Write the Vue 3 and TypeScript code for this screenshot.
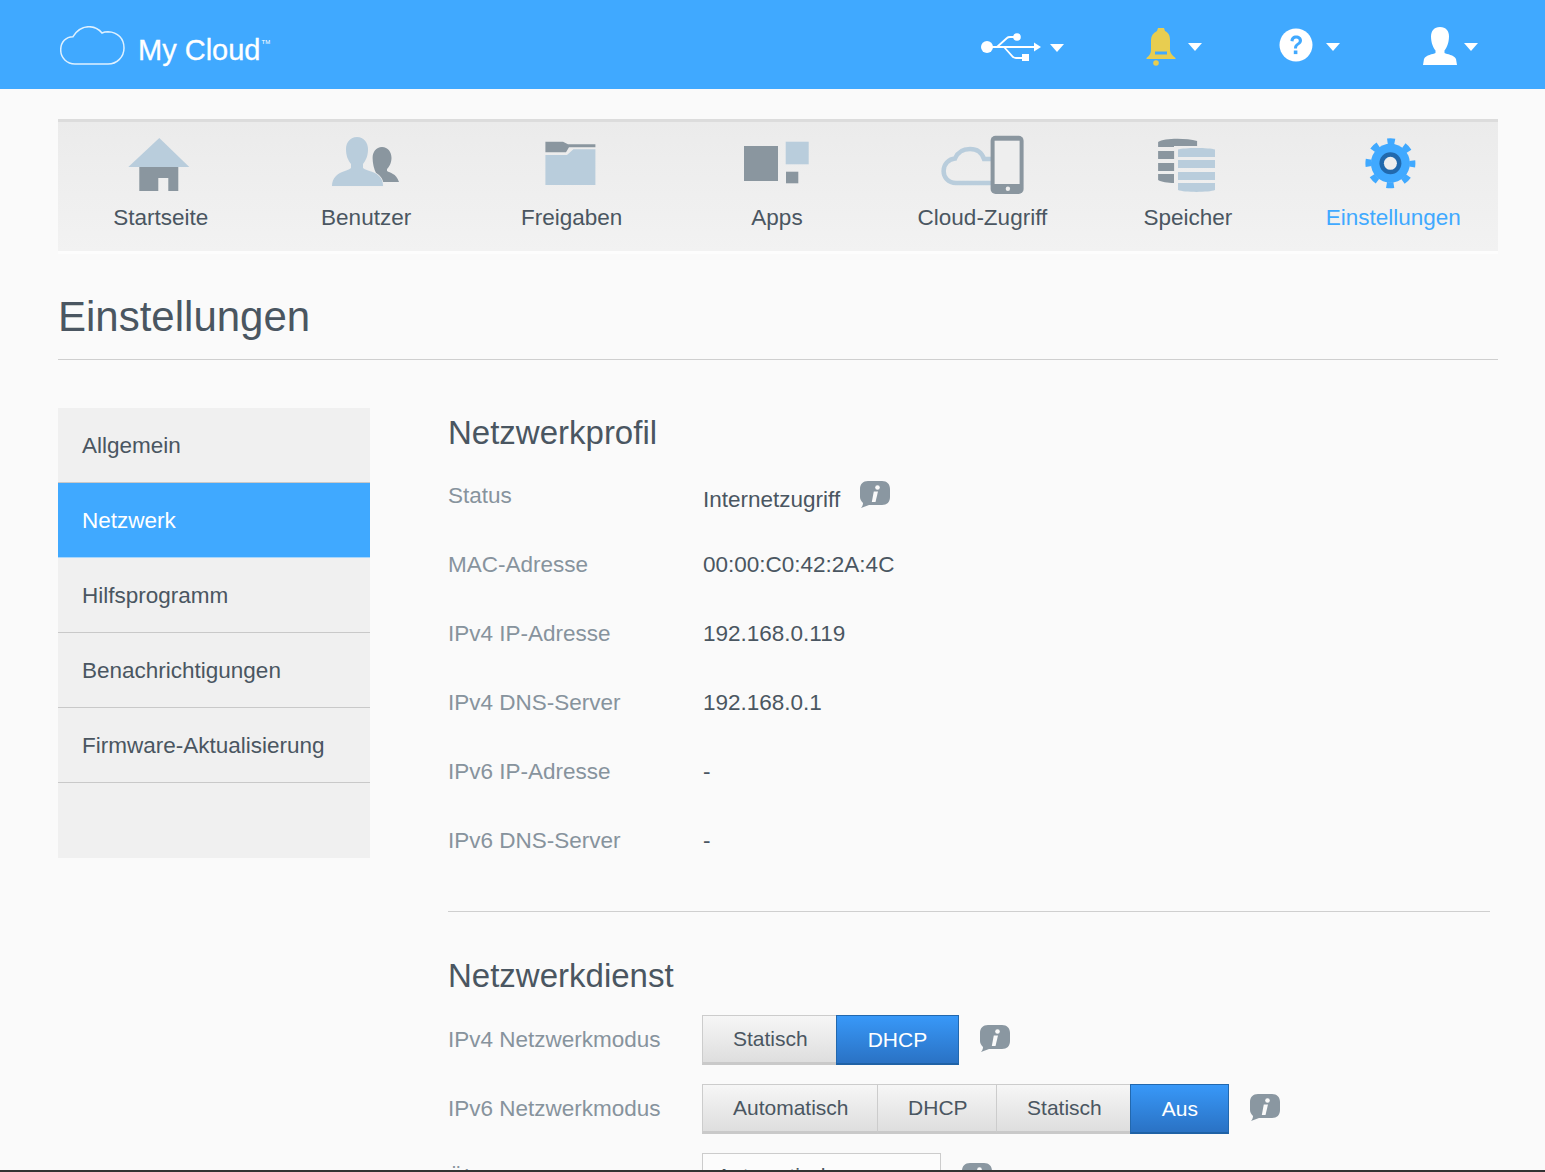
<script setup lang="ts">
const sideItems = [
  { name: 'Allgemein', active: false },
  { name: 'Netzwerk', active: true },
  { name: 'Hilfsprogramm', active: false },
  { name: 'Benachrichtigungen', active: false },
  { name: 'Firmware-Aktualisierung', active: false },
  { name: '', active: false },
]

const profile = [
  { label: 'MAC-Adresse', value: '00:00:C0:42:2A:4C' },
  { label: 'IPv4 IP-Adresse', value: '192.168.0.119' },
  { label: 'IPv4 DNS-Server', value: '192.168.0.1' },
  { label: 'IPv6 IP-Adresse', value: '-' },
  { label: 'IPv6 DNS-Server', value: '-' },
]

const ipv4Modes = [
  { name: 'Statisch', active: false },
  { name: 'DHCP', active: true },
]

const ipv6Modes = [
  { name: 'Automatisch', active: false },
  { name: 'DHCP', active: false },
  { name: 'Statisch', active: false },
  { name: 'Aus', active: true },
]
</script>

<template>
  <div class="page">
    <header class="topbar">
      <div class="logo">
        <svg class="logo-cloud" width="66" height="41" viewBox="0 0 66 41">
          <path d="M15 38H48C57 38 64 31 64 22C64 13 58 6 48 5.700C46 5.700 44 6 42 7C38 2 34 0.700 29 0.700C23 0.700 17 4 13 10.700C6 10.700 0.700 16 0.700 24C0.700 32 7 38 15 38Z" fill="none" stroke="#dff1ff" stroke-width="1.500" />
        </svg>
        <span class="logo-text">My Cloud</span><span class="logo-tm">TM</span>
      </div>
      <div class="top-tools">
        <div class="tool tool-usb">
          <svg width="62" height="38" viewBox="0 0 62 38">
            <circle cx="7" cy="19" r="6" fill="#fff" />
            <path d="M7 19H57" stroke="#fff" stroke-width="1.800" />
            <path d="M54 14.500L61 19L54 23.500Z" fill="#fff" />
            <path d="M17 19L27 10Q28 9 30 9H36M24 19L33 29Q34.500 30 36 30H42" fill="none" stroke="#fff" stroke-width="1.800" />
            <circle cx="37" cy="9" r="3.800" fill="#fff" />
            <rect x="42" y="26" width="7" height="7" fill="#fff" />
          </svg>
          <i class="caret"></i>
        </div>
        <div class="tool tool-bell">
          <svg width="30" height="40" viewBox="0 0 30 40">
            <path d="M12 1H18L19 4C23 6 24 9 24 13V23C24 26 26 28 29.500 31V32H0.500V31C4 28 5 26 5 23V13C5 9 7 6 11 4Z" fill="#e8cd50" />
            <rect x="9" y="24.500" width="12" height="3" fill="#40a9ff" />
            <circle cx="10" cy="36" r="2.800" fill="#e8cd50" />
          </svg>
          <i class="caret"></i>
        </div>
        <div class="tool tool-help">
          <svg width="34" height="34" viewBox="0 0 34 34">
            <circle cx="17" cy="17" r="16.500" fill="#fff" />
            <path d="M11.500 13C11.500 9.500 14 7.500 17 7.500C20.500 7.500 23 9.500 23 12.500C23 15 21.500 16 20 17C18.500 18 18 18.800 18 20.500H15C15 18 15.800 16.800 17.500 15.500C19 14.500 19.800 13.800 19.800 12.700C19.800 11.300 18.700 10.500 17.200 10.500C15.500 10.500 14.500 11.500 14.500 13.500Z" fill="#40a9ff" />
            <rect x="14.800" y="22.500" width="3.600" height="3.600" fill="#40a9ff" />
          </svg>
          <i class="caret"></i>
        </div>
        <div class="tool tool-user">
          <svg width="34" height="38" viewBox="0 0 34 38">
            <path d="M17 0C23 0 26 4 26 9.500C26 16 23.500 21 21.500 23.500V26C24 27.500 31 27.500 33 32L34 38H0L1 32C3 27.500 10 27.500 12.500 26V23.500C10.500 21 8 16 8 9.500C8 4 11 0 17 0Z" fill="#fff" />
          </svg>
          <i class="caret"></i>
        </div>
      </div>
    </header>

    <div class="wrap">
      <nav class="mainnav">
        <a class="nav-item">
          <svg class="nav-icon" width="100" height="64" viewBox="0 0 100 64">
            <path d="M48.300 6L78.300 35H17.300Z" fill="#b9cddc" />
            <path d="M28.300 35H67.300V59H57.300V46H47.300V59H28.300Z" fill="#8a969f" />
          </svg>
          <span>Startseite</span>
        </a>
        <a class="nav-item">
          <svg class="nav-icon" width="100" height="64" viewBox="0 0 100 64">
            <path d="M66 15C72 15 75.500 20 75.500 26C75.500 31 73 35 71 37V39C74 41 80 41 83 50H66L60 41C58 37 56.600 31 56.600 26C56.600 20 60 15 66 15Z" fill="#8a969f" />
            <path d="M41 5C48 5 52 11 52 17C52 24 50 28 47 32V36C50 39 58 39 63 44C66 47 67 50 67 54H16C16 50 17 47 20 44C25 39 32 39 35 36V32C32 28 30 24 30 17C30 11 34 5 41 5Z" fill="#b9cddc" stroke="#ededed" stroke-width="1.500" paint-order="stroke" />
          </svg>
          <span>Benutzer</span>
        </a>
        <a class="nav-item">
          <svg class="nav-icon" width="100" height="64" viewBox="0 0 100 64">
            <path d="M23.400 9.700H41L46 12.300H73.400V15.300H47L44 20.300H23.400Z" fill="#8a969f" />
            <path d="M23.400 23H45L51.400 17.300H73.400V53H23.400Z" fill="#b9cddc" />
          </svg>
          <span>Freigaben</span>
        </a>
        <a class="nav-item">
          <svg class="nav-icon" width="100" height="64" viewBox="0 0 100 64">
            <rect x="17" y="14" width="34" height="35" fill="#8a969f" />
            <rect x="58.700" y="9.700" width="23" height="22.600" fill="#b9cddc" />
            <rect x="59" y="39.700" width="12.300" height="11.600" fill="#8a969f" />
          </svg>
          <span>Apps</span>
        </a>
        <a class="nav-item">
          <svg class="nav-icon" width="100" height="64" viewBox="0 0 100 64">
            <path d="M60 51H24C16 51 11.600 45 11.600 39C11.600 32 17 27 23 26.500C25.500 20.500 31 17 38 17C45 17 50 21 52 27L60 27" fill="none" stroke="#b9cddc" stroke-width="4.500" />
            <rect x="58.600" y="3.700" width="33" height="58.300" rx="5" fill="#8a969f" />
            <rect x="62.600" y="8.700" width="25" height="43.300" fill="#eeeeee" />
            <circle cx="75.900" cy="56.700" r="2.200" fill="#eeeeee" />
          </svg>
          <span>Cloud-Zugriff</span>
        </a>
        <a class="nav-item">
          <svg class="nav-icon" width="100" height="64" viewBox="0 0 100 64">
            <path d="M20.100 10C26 6 48 6 59.100 9V14H36V15H20.100Z" fill="#8a969f" />
            <rect x="20.100" y="19" width="16" height="8" fill="#8a969f" />
            <rect x="20.100" y="31" width="16" height="8" fill="#8a969f" />
            <path d="M20.100 42H36V51C30 51 23 50 20.100 48Z" fill="#8a969f" />
            <path d="M40 17.500C46 15.500 71 15.500 77 17.500V25H40Z" fill="#b9cddc" />
            <rect x="40" y="28" width="37" height="8" fill="#b9cddc" />
            <rect x="40" y="40" width="37" height="8" fill="#b9cddc" />
            <path d="M40 51H77V58C71 60.500 46 60.500 40 58Z" fill="#b9cddc" />
          </svg>
          <span>Speicher</span>
        </a>
        <a class="nav-item nav-item-active">
          <svg class="nav-icon" width="100" height="64" viewBox="0 0 100 64">
            <circle cx="47.400" cy="31.300" r="19.500" fill="#40a9ff" />
            <circle cx="47.400" cy="31.300" r="22" fill="none" stroke="#40a9ff" stroke-width="6" stroke-dasharray="7.500 9.780" stroke-dashoffset="3.750" />
            <circle cx="47.400" cy="31.300" r="11" fill="#2169ad" />
            <circle cx="47.400" cy="31.300" r="6.500" fill="#eeeeee" />
          </svg>
          <span>Einstellungen</span>
        </a>
      </nav>

      <h1 class="page-title">Einstellungen</h1>

      <div class="columns">
        <aside class="sidebar">
          <div
            v-for="item in sideItems"
            :key="item.name"
            class="side-item"
            :class="{ active: item.active }"
          >
            {{ item.name }}
          </div>
        </aside>

        <main class="content">
          <section class="section-profile">
            <h2>Netzwerkprofil</h2>
            <div class="row">
              <div class="label">Status</div>
              <div class="value value-status">Internetzugriff</div>
              <svg class="info info-status" width="30" height="27" viewBox="0 0 30 27">
                <path d="M8 0H22C27 0 30 3 30 8V16C30 21 27 24 22 24H9L1 27C2.500 25 3 24 3 22C1 20 0 18 0 16V8C0 3 3 0 8 0Z" fill="#8a97a1" />
                <circle cx="17.500" cy="6.500" r="2.300" fill="#fafafa" />
                <path d="M13.800 10.500H18L15.500 21H11.800Z" fill="#fafafa" />
              </svg>
            </div>
            <div v-for="row in profile" :key="row.label" class="row">
              <div class="label">{{ row.label }}</div>
              <div class="value">{{ row.value }}</div>
            </div>
          </section>

          <section class="section-service">
            <h2>Netzwerkdienst</h2>
            <div class="control-row">
              <div class="label">IPv4 Netzwerkmodus</div>
              <div class="segments">
                <button v-for="m in ipv4Modes" :key="m.name" class="segment" :class="{ on: m.active }">{{ m.name }}</button>
              </div>
              <svg class="info" width="30" height="27" viewBox="0 0 30 27">
                <path d="M8 0H22C27 0 30 3 30 8V16C30 21 27 24 22 24H9L1 27C2.500 25 3 24 3 22C1 20 0 18 0 16V8C0 3 3 0 8 0Z" fill="#8a97a1" />
                <circle cx="17.500" cy="6.500" r="2.300" fill="#fafafa" />
                <path d="M13.800 10.500H18L15.500 21H11.800Z" fill="#fafafa" />
              </svg>
            </div>
            <div class="control-row">
              <div class="label">IPv6 Netzwerkmodus</div>
              <div class="segments">
                <button v-for="m in ipv6Modes" :key="m.name" class="segment" :class="{ on: m.active }">{{ m.name }}</button>
              </div>
              <svg class="info" width="30" height="27" viewBox="0 0 30 27">
                <path d="M8 0H22C27 0 30 3 30 8V16C30 21 27 24 22 24H9L1 27C2.500 25 3 24 3 22C1 20 0 18 0 16V8C0 3 3 0 8 0Z" fill="#8a97a1" />
                <circle cx="17.500" cy="6.500" r="2.300" fill="#fafafa" />
                <path d="M13.800 10.500H18L15.500 21H11.800Z" fill="#fafafa" />
              </svg>
            </div>
            <div class="control-row">
              <div class="label">Übertragungsrate</div>
              <div class="select">Automatisch</div>
              <svg class="info" width="30" height="27" viewBox="0 0 30 27">
                <path d="M8 0H22C27 0 30 3 30 8V16C30 21 27 24 22 24H9L1 27C2.500 25 3 24 3 22C1 20 0 18 0 16V8C0 3 3 0 8 0Z" fill="#8a97a1" />
                <circle cx="17.500" cy="6.500" r="2.300" fill="#fafafa" />
                <path d="M13.800 10.500H18L15.500 21H11.800Z" fill="#fafafa" />
              </svg>
            </div>
          </section>
        </main>
      </div>
    </div>
    <div class="bottom-edge"></div>
  </div>
</template>

<style>
html,
body {
  margin: 0;
  height: 100%;
  overflow: hidden;
  background: #fafafa;
}
</style>

<style scoped>
.page {
  height: 1172px;
  overflow: hidden;
  background: #fafafa;
  color: #4a5661;
  font-family: 'Liberation Sans', Arial, sans-serif;
  font-size: 22.5px;
}

.topbar {
  height: 89px;
  background: #40a9ff;
  display: flex;
  align-items: center;
  justify-content: space-between;
  padding: 0 67px 0 60px;
}

.logo {
  display: flex;
  align-items: center;
  color: #fff;
}

.logo-cloud {
  margin-top: 3px;
}

.logo-text {
  margin-left: 12px;
  margin-top: 11px;
  font-size: 29px;
  -webkit-text-stroke: 0.3px #fff;
}

.logo-tm {
  font-size: 6px;
  margin-top: -6px;
  margin-left: 1px;
}

.top-tools {
  display: flex;
  align-items: center;
}

.tool {
  display: flex;
  align-items: center;
}

.tool svg {
  display: block;
}

.tool-usb {
  margin-top: 4px;
}

.tool-bell {
  margin-left: 82px;
  margin-top: 5px;
}

.tool-help {
  margin-left: 77px;
}

.tool-user {
  margin-left: 83px;
  margin-top: 2px;
}

.caret {
  display: block;
  width: 0;
  height: 0;
  border-left: 7.5px solid transparent;
  border-right: 7.5px solid transparent;
  border-top: 8px solid #fff;
  margin-left: 8px;
  margin-top: 2px;
}

.tool-bell .caret {
  margin-left: 12px;
  margin-top: -1px;
}

.tool-help .caret {
  margin-left: 13px;
  margin-top: 4px;
}

.tool-user .caret {
  margin-left: 7px;
  margin-top: 2px;
}

.wrap {
  padding: 30px 47px 0 58px;
}

.mainnav {
  display: grid;
  grid-template-columns: repeat(7, 1fr);
  height: 129px;
  padding-right: 2px;
  border-top: 3px solid #dcdcdc;
  border-bottom: 3px solid #fdfdfd;
  background: linear-gradient(#ebebeb, #f2f2f2);
}

.nav-item {
  display: flex;
  flex-direction: column;
  align-items: center;
  padding-top: 10px;
}

.nav-icon {
  display: block;
}

.nav-item span {
  margin-top: 9px;
}

.nav-item-active {
  color: #40a9ff;
}

.page-title {
  margin: 0;
  padding: 39px 0 18px;
  font-size: 42px;
  font-weight: 400;
  line-height: 48px;
  border-bottom: 1px solid #cfcfcf;
}

.columns {
  display: flex;
  margin-top: 48px;
}

.sidebar {
  width: 312px;
  flex: none;
  align-self: flex-start;
  background: #f0f0f0;
}

.side-item {
  height: 75px;
  box-sizing: border-box;
  padding: 2px 0 0 24px;
  display: flex;
  align-items: center;
  border-bottom: 1px solid #c9c9c9;
}

.side-item:last-child {
  border-bottom: 0;
}

.side-item.active {
  background: #40a9ff;
  color: #fff;
  border-bottom-color: #a9d7fc;
}

.content {
  margin-left: 78px;
  width: 1042px;
}

h2 {
  margin: 0;
  font-size: 33px;
  font-weight: 400;
  line-height: 48px;
}

.section-profile {
  padding-bottom: 36px;
  border-bottom: 1px solid #cfcfcf;
}

.section-profile h2 {
  padding-top: 1px;
  margin-bottom: 4px;
}

.row {
  display: flex;
  align-items: center;
  height: 69px;
}

.label {
  width: 255px;
  flex: none;
  color: #87939d;
}

.control-row .label {
  width: 254px;
}

.value-status {
  margin-top: 8px;
}

.info {
  display: block;
  flex: none;
  margin-left: 21px;
  margin-bottom: 4px;
}

.info-status {
  margin-left: 20px;
  margin-bottom: 2px;
}

.section-service {
  padding-top: 40px;
}

.section-service h2 {
  margin-bottom: 15px;
}

.control-row {
  display: flex;
  align-items: center;
  height: 50px;
  margin-bottom: 19px;
}

.segments {
  display: flex;
}

.segment {
  font: inherit;
  font-size: 21px;
  color: inherit;
  height: 50px;
  padding: 0 28.5px 0 30px;
  background: linear-gradient(#f6f6f6, #dedede);
  border: 1px solid #cccccc;
  border-bottom: 3px solid #c9c9c9;
  border-left-width: 0;
  box-sizing: border-box;
}

.segment:first-child {
  border-left-width: 1px;
}

.segment.on {
  color: #fff;
  margin-left: -1px;
  padding: 0 30.5px;
  background: linear-gradient(#3898f8, #2a72c4);
  border: 1px solid #2268ae;
  border-bottom: 2px solid #1f62a6;
}

.select {
  width: 239px;
  height: 50px;
  box-sizing: border-box;
  padding: 10px 0 0 14px;
  border: 1px solid #cccccc;
  background: #fcfcfc;
  font-size: 21px;
}

.bottom-edge {
  position: fixed;
  left: 0;
  right: 0;
  bottom: 0;
  height: 2px;
  background: #333333;
}
</style>
